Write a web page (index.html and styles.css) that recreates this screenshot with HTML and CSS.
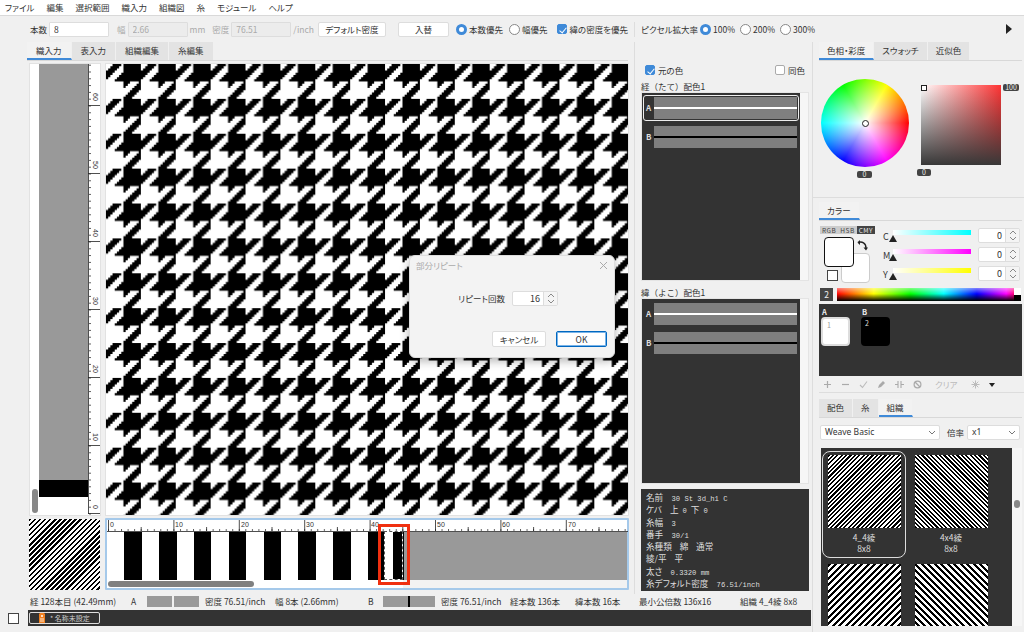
FILE: index.html
```html
<!DOCTYPE html>
<html lang="ja">
<head>
  <meta charset="UTF-8">
  <title>織物デザイン</title>
  <link rel="stylesheet" href="styles.css">
</head>
<body>
  <div class="menubar">
    <span>ファイル</span><span>編集</span><span>選択範囲</span><span>織入力</span><span>組織図</span><span>糸</span><span>モジュール</span><span>ヘルプ</span>
  </div>

  <div class="toolbar">
    <span class="tb-item">本数</span>
    <input class="tb-input" type="text" value="8">
    <span class="tb-item off m-6">幅</span>
    <input class="tb-input off" type="text" value="2.66">
    <span class="tb-item off">mm</span>
    <span class="tb-item off m-5">密度</span>
    <input class="tb-input off" type="text" value="76.51">
    <span class="tb-item off">/inch</span>
    <button class="tb-btn w-68 m-2">デフォルト密度</button>
    <button class="tb-btn w-51 m-10">入替</button>
    <span class="radio on m-5"></span><span class="tb-item">本数優先</span>
    <span class="radio m-4"></span><span class="tb-item">幅優先</span>
    <span class="check on m-8"></span><span class="tb-item">緯の密度を優先</span>
    <span class="tb-sep"></span>
    <span class="tb-item">ピクセル拡大率</span>
    <span class="radio on"></span><span class="tb-item">100%</span>
    <span class="radio m-3"></span><span class="tb-item">200%</span>
    <span class="radio m-3"></span><span class="tb-item">300%</span>
    <span class="tb-more"></span>
  </div>

  <div class="workspace">
    <div class="center">
      <div class="center-top">

        <div class="editor">
          <div class="tabs">
            <span class="tab active">織入力</span><span class="tab">表入力</span><span class="tab">組織編集</span><span class="tab">糸編集</span>
          </div>

          <div class="canvas-row">
            <div class="weft-strip">
              <div class="weft-bar">
                <div class="weft-grey"></div>
                <div class="weft-black"></div>
                <div class="weft-white"></div>
              </div>
              <svg class="v-ruler" width="12" height="451" viewBox="0 0 12 451">
                <defs>
                  <pattern id="vticks" width="12" height="6.8" patternUnits="userSpaceOnUse" patternTransform="translate(0 449.5)">
                    <path d="M0 0.5H3" stroke="#333" stroke-width="0.8"/>
                  </pattern>
                </defs>
                <rect x="1" width="11" height="451" fill="url(#vticks)"/>
                <path d="M0.5 0V450M0 449.5H12M0 381.5H12M0 313.5H12M0 245.5H12M0 177.5H12M0 109.5H12M0 41.5H12" stroke="#222" stroke-width="0.8" fill="none"/>
                <text class="v-label" transform="translate(5 29) rotate(90)">60</text>
                <text class="v-label" transform="translate(5 97) rotate(90)">50</text>
                <text class="v-label" transform="translate(5 165) rotate(90)">40</text>
                <text class="v-label" transform="translate(5 233) rotate(90)">30</text>
                <text class="v-label" transform="translate(5 301) rotate(90)">20</text>
                <text class="v-label" transform="translate(5 369) rotate(90)">10</text>
                <text class="v-label" transform="translate(5 441) rotate(90)">0</text>
              </svg>
              <div class="v-thumb"></div>
            </div>

            <svg class="fabric" width="522" height="451">
              <defs>
                <pattern id="hound" width="16" height="16" patternUnits="userSpaceOnUse" patternTransform="scale(2.18)">
                  <path d="M3 0h4v1H3z M8 0h8v1H8z M2 1h4v1H2z M8 1h8v1H8z M1 2h4v1H1z M8 2h8v1H8z M0 3h4v1H0z M8 3h8v1H8z M0 4h3v1H0z M7 4h9v1H7z M0 5h2v1H0z M6 5h10v1H6z M0 6h1v1H0z M5 6h11v1H5z M4 7h12v1H4z M8 8h3v1H8z M15 8h1v1h-1z M8 9h2v1H8z M14 9h2v1h-2z M8 10h1v1H8z M13 10h3v1h-3z M12 11h4v1h-4z M11 12h4v1h-4z M10 13h4v1h-4z M9 14h4v1H9z M8 15h4v1H8z"/>
                </pattern>
              </defs>
              <rect width="522" height="451" fill="url(#hound)"/>
            </svg>
          </div>

          <div class="warp-row">
            <div class="twill twill-main"></div>
            <div class="warp-box">
              <svg class="h-ruler" width="521" height="12" viewBox="0 0 521 12">
                <defs>
                  <pattern id="hticks" width="6.54" height="12" patternUnits="userSpaceOnUse" patternTransform="translate(1 0)">
                    <path d="M0.5 9V11" stroke="#333" stroke-width="0.8"/>
                  </pattern>
                </defs>
                <rect width="521" height="12" fill="url(#hticks)"/>
                <path d="M0 11.5H521M1.5 0V11M66.9 0V11M132.3 0V11M197.7 0V11M263.1 0V11M328.5 0V11M393.9 0V11M459.3 0V11M34.2 7V11M99.6 7V11M165 7V11M230.4 7V11M295.8 7V11M361.2 7V11M426.6 7V11M492 7V11" stroke="#222" stroke-width="0.8" fill="none"/>
                <text class="h-label" x="3" y="7">0</text>
                <text class="h-label" x="68" y="7">10</text>
                <text class="h-label" x="134" y="7">20</text>
                <text class="h-label" x="199" y="7">30</text>
                <text class="h-label" x="264" y="7">40</text>
                <text class="h-label" x="330" y="7">50</text>
                <text class="h-label" x="395" y="7">60</text>
                <text class="h-label" x="461" y="7">70</text>
              </svg>
              <div class="warp-bars">
                <div class="warp-stripes"></div>
                <div class="warp-grey"></div>
              </div>
              <div class="h-scroll"><div class="h-thumb"></div></div>
              <div class="sel-dash"><span class="sel-black"></span></div>
              <div class="sel-red"></div>
            </div>
          </div>
        </div>

        <div class="colorways">
          <div class="cw-checks">
            <span class="check on"></span><span>元の色</span>
            <span class="cw-spacer"></span>
            <span class="check"></span><span>同色</span>
          </div>
          <div class="cw-title">経（たて）配色1</div>
          <div class="cw-list warp-list">
            <div class="cw-dark">
              <div class="cw-row selected">
                <span class="cw-letter">A</span>
                <div class="cw-bars"><i></i><b class="white"></b><i></i></div>
              </div>
              <div class="cw-row">
                <span class="cw-letter">B</span>
                <div class="cw-bars"><i></i><b></b><i></i></div>
              </div>
            </div>
            <div class="cw-track"></div>
          </div>
          <div class="cw-title second">緯（よこ）配色1</div>
          <div class="cw-list weft-list">
            <div class="cw-dark">
              <div class="cw-row">
                <span class="cw-letter">A</span>
                <div class="cw-bars"><i></i><b class="white"></b><i></i></div>
              </div>
              <div class="cw-row">
                <span class="cw-letter">B</span>
                <div class="cw-bars"><i></i><b></b><i></i></div>
              </div>
            </div>
            <div class="cw-track"></div>
          </div>
          <div class="info">
            <div>名前 <span class="mono">&nbsp;30 St 3d_h1 C</span></div>
            <div>ケバ <span class="mono">&nbsp;</span>上 <span class="mono">0</span> 下 <span class="mono">0</span></div>
            <div>糸幅 <span class="mono">&nbsp;3</span></div>
            <div>番手 <span class="mono">&nbsp;30/1</span></div>
            <div>糸種類&nbsp; 綿&nbsp; 通常</div>
            <div>綾/平&nbsp; 平</div>
            <div>太さ <span class="mono">&nbsp;0.3320 mm</span></div>
            <div>糸デフォルト密度 <span class="mono">&nbsp;76.51/inch</span></div>
          </div>
        </div>
      </div>

      <div class="statusbar">
        <span>経 128本目 (42.49mm)</span>
        <span>A</span>
        <span class="st-swatches"><i></i><i></i></span>
        <span>密度 76.51/inch</span>
        <span>幅 8本 (2.66mm)</span>
        <span>B</span>
        <span class="st-swatch-b"><b></b></span>
        <span>密度 76.51/inch</span>
        <span>経本数 136本</span>
        <span>緯本数 16本</span>
        <span>最小公倍数 136x16</span>
        <span>組織 4_4綾 8x8</span>
      </div>

      <div class="docrow">
        <span class="doc-check"></span>
        <div class="docbar">
          <div class="doc-tab">
            <svg width="6" height="10" viewBox="0 0 6 10"><path d="M1 0H5L6 1V10H0V1Z" fill="#f08020"/><circle cx="3" cy="3" r="1" fill="#fff"/><path d="M1 6H5M1 8H5" stroke="#fff" stroke-width="0.8"/></svg>
            <span>* 名称未設定</span>
          </div>
        </div>
      </div>
    </div>

    <div class="side">
      <div class="tabs">
        <span class="tab active">色相・彩度</span><span class="tab">スウォッチ</span><span class="tab">近似色</span>
      </div>
      <div class="hs-panel">
        <div class="wheel">
          <span class="wheel-dot"></span>
          <span class="badge wheel-badge">0</span>
        </div>
        <div class="sv">
          <span class="sv-marker"></span>
          <span class="badge sv-badge-top">100</span>
          <span class="badge sv-badge-bottom">0</span>
        </div>
      </div>

      <div class="tabs short">
        <span class="tab active">カラー</span>
      </div>
      <div class="color-panel">
        <div class="color-left">
          <div class="modes"><span>RGB</span><span>HSB</span><span class="on">CMY</span></div>
          <div class="back-chip"></div>
          <div class="front-chip"></div>
          <svg class="swap" width="11" height="11" viewBox="0 0 11 11"><path d="M1 2.5C5 1 9 3 9 8" fill="none" stroke="#222" stroke-width="1.4"/><path d="M3 0L0.5 2.5L3 5ZM6.5 7.5H11L9 10.5Z" fill="#222"/></svg>
          <div class="none-chip"></div>
        </div>
        <div class="sliders">
          <div class="slider-row">
            <span class="sl-name">C</span>
            <div class="sl-track cyan"><span class="sl-tri"></span></div>
            <div class="spin"><span class="spin-val">0</span><span class="spin-btn"><svg width="8" height="11" viewBox="0 0 8 11"><path d="M1 4L4 1L7 4M1 7L4 10L7 7" fill="none" stroke="#888"/></svg></span></div>
          </div>
          <div class="slider-row">
            <span class="sl-name">M</span>
            <div class="sl-track magenta"><span class="sl-tri"></span></div>
            <div class="spin"><span class="spin-val">0</span><span class="spin-btn"><svg width="8" height="11" viewBox="0 0 8 11"><path d="M1 4L4 1L7 4M1 7L4 10L7 7" fill="none" stroke="#888"/></svg></span></div>
          </div>
          <div class="slider-row">
            <span class="sl-name">Y</span>
            <div class="sl-track yellow"><span class="sl-tri"></span></div>
            <div class="spin"><span class="spin-val">0</span><span class="spin-btn"><svg width="8" height="11" viewBox="0 0 8 11"><path d="M1 4L4 1L7 4M1 7L4 10L7 7" fill="none" stroke="#888"/></svg></span></div>
          </div>
        </div>
      </div>

      <div class="spectrum-row">
        <span class="spec-num">2</span>
        <div class="spectrum"><span class="spec-wb"></span></div>
      </div>

      <div class="palette">
        <div class="pal-item"><span class="pal-letter">A</span><div class="pal-chip white">1</div></div>
        <div class="pal-item"><span class="pal-letter">B</span><div class="pal-chip black">2</div></div>
      </div>

      <div class="pal-tools">
        <svg width="9" height="9" viewBox="0 0 9 9"><path d="M4.5 1V8M1 4.5H8" stroke="#aaa" stroke-width="1.2"/></svg>
        <svg width="9" height="9" viewBox="0 0 9 9"><path d="M1 4.5H8" stroke="#aaa" stroke-width="1.2"/></svg>
        <svg width="9" height="9" viewBox="0 0 9 9"><path d="M1 5L3.5 7.5L8 1.5" fill="none" stroke="#bbb" stroke-width="1.1"/></svg>
        <svg width="9" height="9" viewBox="0 0 9 9"><path d="M1 8L2 5L6 1L8 3L4 7Z" fill="#aaa"/></svg>
        <svg width="9" height="9" viewBox="0 0 9 9"><path d="M3 1V8M6 1V8M0 4.5H3M6 4.5H9" stroke="#aaa" stroke-width="1.1"/></svg>
        <svg width="9" height="9" viewBox="0 0 9 9"><circle cx="4.5" cy="4.5" r="3.4" fill="none" stroke="#aaa" stroke-width="1.2"/><path d="M2 2L7 7" stroke="#aaa" stroke-width="1.2"/></svg>
        <span class="clear">クリア</span>
        <svg width="9" height="9" viewBox="0 0 9 9"><path d="M4.5 0.5V8.5M0.5 4.5H8.5M1.7 1.7L7.3 7.3M7.3 1.7L1.7 7.3" stroke="#bbb"/></svg>
        <span class="pal-drop"></span>
      </div>

      <div class="tabs lower">
        <span class="tab">配色</span><span class="tab narrow">糸</span><span class="tab active">組織</span>
      </div>

      <div class="weave-select">
        <div class="select wide">Weave Basic<svg width="8" height="5" viewBox="0 0 8 5"><path d="M1 1L4 4L7 1" fill="none" stroke="#777"/></svg></div>
        <span>倍率</span>
        <div class="select small">x1<svg width="8" height="5" viewBox="0 0 8 5"><path d="M1 1L4 4L7 1" fill="none" stroke="#777"/></svg></div>
      </div>

      <div class="weave-list">
        <div class="weave-grid">
          <div class="weave-item selected"><div class="twill fine-up"></div><p>4_4綾</p><p>8x8</p></div>
          <div class="weave-item"><div class="twill fine-down"></div><p>4x4綾</p><p>8x8</p></div>
          <div class="weave-item"><div class="twill wide-up"></div></div>
          <div class="weave-item"><div class="twill wide-down"></div></div>
        </div>
        <div class="weave-track"><span></span></div>
      </div>
    </div>
  </div>

  <div class="dialog">
    <div class="dlg-title"><span>部分リピート</span>
      <svg width="9" height="9" viewBox="0 0 9 9"><path d="M1 1L8 8M8 1L1 8" stroke="#aaa"/></svg>
    </div>
    <div class="dlg-body">
      <span>リピート回数</span>
      <div class="spin dlg-spin"><span class="spin-val">16</span><span class="spin-btn"><svg width="8" height="11" viewBox="0 0 8 11"><path d="M1 4L4 1L7 4M1 7L4 10L7 7" fill="none" stroke="#888"/></svg></span></div>
    </div>
    <div class="dlg-buttons">
      <button class="dlg-btn">キャンセル</button>
      <button class="dlg-btn primary">OK</button>
    </div>
  </div>
</body>
</html>
```

FILE: styles.css
```css
* {
  box-sizing: border-box;
}

body {
  position: relative;
  margin: 0;
  width: 1024px;
  height: 632px;
  overflow: hidden;
  background-color: #f0f0f0;
  color: #333;
  font-family: "Noto Sans CJK JP", "Noto Sans", sans-serif;
  font-size: 8.5px;
  font-feature-settings: "palt";
  line-height: 1.2;
}

p {
  margin: 0;
}

/* menu */
.menubar {
  display: flex;
  gap: 12px;
  height: 16px;
  padding: 2px 0 0 5px;
  background-color: white;
  border-bottom: 1px solid #d9d9d9;
}

/* toolbar */
.toolbar {
  display: flex;
  align-items: center;
  gap: 2px;
  height: 26px;
  padding-left: 30px;
}

.tb-item.off {
  color: #aaa;
}

.tb-input {
  width: 60px;
  height: 15px;
  padding: 0 4px;
  font: inherit;
  color: #333;
  background-color: white;
  border: 1px solid #ddd;
  border-radius: 1px;
}

.tb-input.off {
  color: #aaa;
  background-color: #ececec;
}

.tb-btn {
  height: 15px;
  padding: 0;
  font: inherit;
  color: #333;
  background-color: white;
  border: 1px solid #ddd;
  border-radius: 2px;
}

.w-68 { width: 68px; }
.w-51 { width: 51px; }
.m-2 { margin-left: 2px; }
.m-3 { margin-left: 3px; }
.m-4 { margin-left: 4px; }
.m-5 { margin-left: 5px; }
.m-6 { margin-left: 6px; }
.m-8 { margin-left: 8px; }
.m-10 { margin-left: 10px; }

.radio {
  flex: none;
  width: 11px;
  height: 11px;
  background-color: white;
  border: 1px solid #888;
  border-radius: 50%;
}

.radio.on {
  border: 3px solid #3f8ad8;
}

.check {
  position: relative;
  flex: none;
  display: inline-block;
  width: 10px;
  height: 10px;
  background-color: white;
  border: 1px solid #aaa;
  border-radius: 2px;
}

.check.on {
  background-color: #3f8ad8;
  border-color: #3f8ad8;
}

.check.on::after {
  content: "";
  position: absolute;
  left: 2.5px;
  top: 0.5px;
  width: 3px;
  height: 6px;
  border: solid white;
  border-width: 0 1.3px 1.3px 0;
  transform: rotate(40deg);
}

.tb-sep {
  width: 1px;
  height: 15px;
  margin: 0 4px;
  background-color: #ddd;
}

.tb-more {
  width: 0;
  height: 0;
  margin-left: auto;
  margin-right: 12px;
  border-left: 6px solid #222;
  border-top: 5px solid transparent;
  border-bottom: 5px solid transparent;
}

/* layout */
.workspace {
  display: flex;
  height: 590px;
}

.center {
  display: flex;
  flex-direction: column;
  width: 813px;
  border-right: 1px solid #ddd;
}

.center-top {
  display: flex;
  height: 552px;
}

.editor {
  width: 634px;
  padding-left: 27px;
}

.tabs {
  display: flex;
  height: 19px;
  border-bottom: 1px solid #d8d8d8;
}

.editor .tabs {
  width: 601px;
}

.tab {
  padding: 3px 9px 0;
  background-color: #e3e3e3;
  border-right: 1px solid #f0f0f0;
  white-space: nowrap;
}

.tab.active {
  background-color: #f2f2f2;
  border-bottom: 2px solid #3f8ad8;
}

/* weave canvas */
.canvas-row {
  display: flex;
  gap: 6px;
  height: 454px;
  padding: 3px 0 0 3px;
}

.weft-strip {
  position: relative;
  display: flex;
  width: 70px;
  height: 451px;
  padding-left: 9px;
  background-color: white;
  box-shadow: 0 0 0 1px #e2e2e2;
}

.weft-bar {
  display: flex;
  flex-direction: column;
  width: 49px;
}

.weft-grey {
  height: 416px;
  background-color: #999;
}

.weft-black {
  height: 17px;
  background-color: black;
}

.weft-white {
  flex: 1;
}

.v-label {
  font-family: "Liberation Sans", sans-serif;
  font-size: 7px;
  fill: #333;
}

.h-label {
  font-family: "Liberation Sans", sans-serif;
  font-size: 7px;
  fill: #333;
}

.v-thumb {
  position: absolute;
  left: 2px;
  top: 425px;
  width: 6px;
  height: 24px;
  background-color: #888;
  border-radius: 3px;
}

.fabric {
  flex: none;
  background-color: white;
  box-shadow: 0 0 0 1px #e2e2e2;
}

/* warp strip */
.warp-row {
  display: flex;
  gap: 5px;
  padding: 3px 0 0 2px;
}

.twill {
  flex: none;
  width: 73px;
  height: 73px;
}

.twill-main {
  width: 71px;
  height: 71px;
  margin-top: 1px;
  background: repeating-linear-gradient(135deg, black 0 1.8px, white 1.8px 3.6px);
}

.warp-box {
  position: relative;
  width: 524px;
  height: 72px;
  background-color: white;
  border: 2px solid #a5c9ea;
  border-radius: 1px;
}

.h-ruler {
  display: block;
}

.warp-bars {
  display: flex;
  height: 48px;
}

.warp-stripes {
  width: 297px;
  background: repeating-linear-gradient(90deg, white 0 17.4px, black 17.4px 34.8px);
}

.warp-grey {
  flex: 1;
  background-color: #999;
}

.h-scroll {
  height: 8px;
  padding: 1px 0 0 1px;
  background: linear-gradient(90deg, white 57%, #f2f2f2 57%);
}

.h-thumb {
  width: 146px;
  height: 6px;
  background-color: #808080;
  border-radius: 3px;
}

.sel-dash {
  position: absolute;
  left: 277px;
  top: 11px;
  width: 19px;
  height: 49px;
  background-color: white;
  border: 1px dashed #555;
}

.sel-black {
  position: absolute;
  right: 0;
  top: 0;
  bottom: 0;
  width: 9px;
  background-color: black;
}

.sel-red {
  position: absolute;
  left: 271px;
  top: 4px;
  width: 32px;
  height: 61px;
  border: 3px solid #f03010;
}

/* colorways */
.colorways {
  width: 178px;
  padding-left: 6px;
  border-left: 1px solid #ddd;
}

.cw-checks {
  display: flex;
  align-items: center;
  gap: 3px;
  height: 14px;
  margin-top: 21px;
  padding: 0 7px 0 4px;
}

.cw-spacer {
  flex: 1;
}

.cw-title {
  height: 10px;
  margin-top: 4px;
  font-feature-settings: normal;
}

.cw-title.second {
  margin-top: 6px;
}

.cw-list {
  display: flex;
  width: 168px;
  margin-top: 1px;
  border: 1px solid #e4e4e4;
}

.warp-list {
  height: 189px;
}

.weft-list {
  height: 186px;
}

.cw-dark {
  display: flex;
  flex-direction: column;
  gap: 3px;
  width: 158px;
  padding: 2px 1px;
  background-color: #333;
}

.cw-track {
  flex: 1;
  background-color: #f6f6f6;
}

.cw-row {
  display: flex;
  align-items: center;
  height: 26px;
  padding: 1px;
  border: 1px solid transparent;
  border-radius: 3px;
}

.cw-row.selected {
  border-color: #eee;
}

.cw-letter {
  width: 9px;
  padding-left: 1px;
  color: #ddd;
  font-weight: 700;
  font-size: 8px;
}

.cw-bars {
  display: flex;
  flex-direction: column;
  flex: 1;
  height: 22px;
}

.cw-bars i {
  flex: 1;
  background-color: #7f7f7f;
}

.cw-bars b {
  height: 2px;
  background-color: black;
}

.cw-bars b.white {
  background-color: white;
}

.info {
  width: 168px;
  height: 102px;
  margin-top: 5px;
  padding: 2px 5px;
  background-color: #333;
  color: #ddd;
  font-size: 8.6px;
  word-spacing: 2px;
  white-space: nowrap;
}

.info div {
  height: 12.3px;
  line-height: 12.3px;
}

.mono {
  font-family: "Liberation Mono", monospace;
  font-size: 7.2px;
  word-spacing: 0;
}

/* status */
.statusbar {
  display: grid;
  grid-template-columns: 101px 16px 58px 70px 93px 15px 58px 69px 65px 64px 101px auto;
  align-items: center;
  height: 15px;
  padding-left: 30px;
  white-space: nowrap;
}

.st-swatches {
  display: flex;
  gap: 2px;
  height: 11px;
}

.st-swatches i {
  width: 25px;
  background-color: #999;
}

.st-swatch-b {
  display: flex;
  justify-content: center;
  width: 52px;
  height: 11px;
  background-color: #999;
}

.st-swatch-b b {
  width: 1.5px;
  background-color: black;
}

.docrow {
  display: flex;
  align-items: center;
  height: 16px;
  margin-top: 1px;
  padding-left: 8px;
}

.doc-check {
  width: 11px;
  height: 11px;
  margin-right: 9px;
  background-color: white;
  border: 1px solid #444;
}

.docbar {
  flex: 1;
  height: 16px;
  margin-right: 1px;
  padding: 2px 1px;
  background-color: #333;
}

.doc-tab {
  display: flex;
  align-items: center;
  gap: 5px;
  width: 71px;
  height: 12px;
  padding-left: 9px;
  border: 1px solid #ddd;
  border-radius: 2px;
  color: #ccc;
  font-size: 7px;
}

/* right side */
.side {
  width: 211px;
  padding-left: 6px;
}

.side .tabs {
  width: 203px;
}

.side .tab {
  padding: 3px 8px 0;
}

.hs-panel {
  position: relative;
  height: 137px;
  border-bottom: 1px solid #ddd;
  margin-left: -6px;
}

.wheel {
  position: absolute;
  left: 8px;
  top: 18px;
  width: 88px;
  height: 88px;
  border-radius: 50%;
  background:
    radial-gradient(closest-side, white, rgba(255, 255, 255, 0)),
    conic-gradient(from 90deg, red, magenta, blue, cyan, lime, yellow, red);
}

.wheel-dot {
  position: absolute;
  left: 41px;
  top: 41px;
  width: 7px;
  height: 7px;
  background-color: white;
  border: 1px solid #222;
  border-radius: 50%;
}

.badge {
  position: absolute;
  padding: 0 3px;
  height: 7px;
  background-color: #444;
  color: #eee;
  font-size: 7px;
  line-height: 7px;
  border-radius: 2px;
}

.wheel-badge {
  left: 36px;
  top: 92px;
  width: 15px;
  text-align: center;
}

.sv {
  position: absolute;
  left: 108px;
  top: 24px;
  width: 80px;
  height: 80px;
  background:
    linear-gradient(to top, #383838, rgba(56, 56, 56, 0)),
    linear-gradient(to right, white, #ff3333);
}

.sv-marker {
  position: absolute;
  left: 0;
  top: 0;
  width: 6px;
  height: 6px;
  background-color: white;
  border: 1px solid #222;
}

.sv-badge-top {
  left: 82px;
  top: -1px;
  width: 16px;
  padding: 0;
  text-align: center;
}

.sv-badge-bottom {
  left: -4px;
  top: 84px;
  width: 14px;
  text-align: center;
}

.tabs.short {
  margin-top: 4px;
}

/* color */
.color-panel {
  display: flex;
  height: 59px;
  margin-top: 5px;
}

.color-left {
  position: relative;
  flex: none;
  width: 58px;
}

.modes {
  display: flex;
  width: 55px;
  margin-left: 1px;
  height: 8px;
  background-color: #ccc;
  font-size: 6.5px;
  line-height: 8px;
  letter-spacing: 0.5px;
  color: #444;
  text-align: center;
}

.modes span {
  flex: 1;
}

.modes .on {
  background-color: #444;
  color: #eee;
}

.front-chip {
  position: absolute;
  left: 5px;
  top: 11px;
  width: 30px;
  height: 30px;
  background-color: white;
  border: 1px solid #111;
  border-radius: 4px;
}

.back-chip {
  position: absolute;
  left: 22px;
  top: 27px;
  width: 29px;
  height: 30px;
  background-color: white;
  border: 1px solid #ccc;
  border-radius: 4px;
}

.swap {
  position: absolute;
  left: 38px;
  top: 14px;
}

.none-chip {
  position: absolute;
  left: 8px;
  top: 44px;
  width: 11px;
  height: 11px;
  background-color: white;
  border: 1px solid #444;
}

.sliders {
  display: flex;
  flex-direction: column;
  gap: 4px;
  margin-left: 6px;
  margin-top: 2px;
}

.slider-row {
  display: flex;
  align-items: center;
  width: 137px;
  height: 15px;
}

.sl-name {
  width: 10px;
  margin-top: 4px;
  font-size: 9px;
}

.sl-track {
  position: relative;
  width: 78px;
  height: 5px;
  margin-top: -6px;
}

.sl-track.cyan { background: linear-gradient(to right, white, cyan); }
.sl-track.magenta { background: linear-gradient(to right, white, magenta); }
.sl-track.yellow { background: linear-gradient(to right, white, yellow); }

.sl-tri {
  position: absolute;
  left: -4px;
  top: 5px;
  width: 0;
  height: 0;
  border-left: 4px solid transparent;
  border-right: 4px solid transparent;
  border-bottom: 7px solid #222;
}

.spin {
  display: flex;
  width: 42px;
  height: 15px;
  margin-left: auto;
  background-color: white;
  border: 1px solid #ddd;
  border-radius: 2px;
}

.spin-val {
  flex: 1;
  padding-right: 3px;
  text-align: right;
  font-size: 9px;
  line-height: 13px;
}

.spin-btn {
  display: flex;
  align-items: center;
  justify-content: center;
  width: 14px;
  border-left: 1px solid #ddd;
  background-color: #f4f4f4;
}

.spectrum-row {
  display: flex;
  gap: 4px;
  height: 13px;
  margin-top: 3px;
  margin-left: 1px;
}

.spec-num {
  width: 13px;
  background-color: #444;
  color: #eee;
  text-align: center;
  line-height: 13px;
}

.spectrum {
  position: relative;
  width: 184px;
  background:
    linear-gradient(to bottom, rgba(255, 255, 255, 0.5), rgba(0, 0, 0, 0) 45%, rgba(0, 0, 0, 1)),
    linear-gradient(to right, #f00, #ff0 20%, #0f0 40%, #0ff 58%, #00f 76%, #f0f 92%, #f00);
}

.spec-wb {
  position: absolute;
  right: 0;
  top: 0;
  bottom: 0;
  width: 7px;
  background: linear-gradient(to bottom, white 50%, black 50%);
}

.palette {
  display: flex;
  gap: 11px;
  width: 203px;
  height: 72px;
  margin-top: 3px;
  padding: 3px 2px;
  background-color: #333;
}

.pal-letter {
  display: block;
  height: 10px;
  color: #eee;
  font-weight: 700;
  font-size: 7.5px;
  padding-left: 1px;
}

.pal-chip {
  width: 29px;
  height: 29px;
  padding: 2px 4px;
  border-radius: 4px;
  color: #999;
  font-size: 7px;
}

.pal-chip.white {
  background-color: white;
  border: 2px solid #ddd;
}

.pal-chip.black {
  background-color: black;
  color: #ddd;
}

.pal-tools {
  display: flex;
  align-items: center;
  gap: 9px;
  height: 16px;
  padding-left: 4px;
  margin-top: 1px;
  color: #bbb;
  border-bottom: 1px solid #ddd;
}

.pal-tools .clear {
  margin: 0 4px;
}

.pal-drop {
  width: 0;
  height: 0;
  border-left: 3.5px solid transparent;
  border-right: 3.5px solid transparent;
  border-top: 4px solid #222;
}

.tabs.lower {
  margin-top: 6px;
}

.weave-select {
  display: flex;
  align-items: center;
  gap: 7px;
  height: 15px;
  margin: 7px 0 0 1px;
}

.select {
  display: flex;
  align-items: center;
  justify-content: space-between;
  height: 15px;
  padding: 0 3px 0 4px;
  background-color: white;
  border: 1px solid #ddd;
  border-radius: 2px;
  font-family: "Noto Sans", sans-serif;
  font-size: 8.5px;
}

.select.wide { width: 120px; }
.select.small { width: 53px; margin-left: -4px; }

.weave-list {
  display: flex;
  width: 201px;
  height: 178px;
  margin: 8px 0 0 2px;
  overflow: hidden;
}

.weave-grid {
  flex: 1;
  display: flex;
  flex-wrap: wrap;
  align-content: flex-start;
  gap: 2px 3px;
  padding: 3px 1px;
  background-color: #333;
  color: #ddd;
  text-align: center;
}

.weave-item {
  width: 84px;
  height: 107px;
  padding: 3px 5px;
  border: 1px solid transparent;
  border-radius: 8px;
}

.weave-item.selected {
  border-color: #ddd;
}

.weave-item p {
  line-height: 11px;
}

.weave-item p:first-of-type {
  margin-top: 4px;
}

.fine-up { background: repeating-linear-gradient(135deg, black 0 1.55px, white 1.55px 3.1px); }
.fine-down { background: repeating-linear-gradient(45deg, black 0 1.55px, white 1.55px 3.1px); }
.wide-up { background: repeating-linear-gradient(135deg, black 0 2.3px, white 2.3px 4.6px); }
.wide-down { background: repeating-linear-gradient(45deg, black 0 2.3px, white 2.3px 4.6px); }

.weave-track {
  position: relative;
  width: 10px;
  background-color: #f6f6f6;
}

.weave-track span {
  position: absolute;
  left: 2px;
  top: 52px;
  width: 6px;
  height: 8px;
  background-color: #888;
  border-radius: 3px;
}

/* dialog */
.dialog {
  position: absolute;
  left: 409px;
  top: 255px;
  width: 206px;
  height: 103px;
  background-color: #f3f3f3;
  border: 1px solid #ddd;
  border-radius: 6px;
  box-shadow: 0 3px 10px rgba(0, 0, 0, 0.3);
}

.dlg-title {
  display: flex;
  justify-content: space-between;
  align-items: center;
  height: 19px;
  padding: 0 6px;
  color: #aaa;
}

.dlg-body {
  display: flex;
  align-items: center;
  justify-content: flex-end;
  gap: 7px;
  height: 15px;
  margin-top: 16px;
  padding-right: 56px;
}

.dlg-spin {
  width: 46px;
  margin-left: 0;
}

.dlg-buttons {
  display: flex;
  justify-content: flex-end;
  gap: 10px;
  margin-top: 25px;
  padding-right: 7px;
}

.dlg-btn {
  width: 54px;
  height: 16px;
  padding: 0;
  font: inherit;
  color: #333;
  background-color: white;
  border: 1px solid #ddd;
  border-radius: 2px;
}

.dlg-btn.primary {
  width: 51px;
  border: 1px solid #0067c0;
  box-shadow: inset 0 0 0 1px #7ab4e8;
}
```
